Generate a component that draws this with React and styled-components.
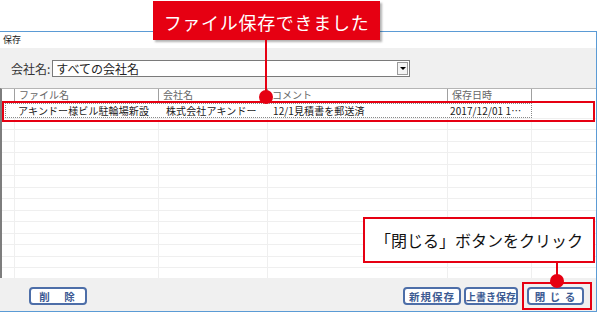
import React from "react";
import styled, { createGlobalStyle } from "styled-components";

const GlobalStyle = createGlobalStyle`
  html, body {
    margin: 0;
    padding: 0;
    background: #ffffff;
  }
  body {
    font-family: "Noto Sans CJK JP", "Noto Sans", sans-serif;
  }
`;

const RED = "#e60012";

// Page canvas (annotations sit over the window)
const Canvas = styled.div`
  position: relative;
  width: 599px;
  height: 313px;
  overflow: hidden;
  padding-top: 31px;
  box-sizing: border-box;
`;

// Dialog window
const Window = styled.div`
  width: 597px;
  height: 281px;
  box-sizing: border-box;
  border: 1px solid #5b9bd5;
  border-left: none;
  display: flex;
  flex-direction: column;
  background: #f0f0f0;
`;

const TitleBar = styled.div`
  height: 16px;
  background: #ffffff;
  font-size: 9px;
  line-height: 15px;
  color: #222;
  padding-left: 3px;
`;

const FilterRow = styled.div`
  height: 40px;
  display: flex;
  align-items: flex-start;
  padding: 12px 0 0 11px;
  box-sizing: border-box;
`;

const Label = styled.span`
  font-size: 12px;
  line-height: 17px;
  color: #333;
  margin-right: 2px;
`;

const Combo = styled.div`
  width: 358px;
  height: 17px;
  box-sizing: border-box;
  border: 1px solid #7a7a7a;
  background: #fff;
  display: flex;
  align-items: center;
  font-size: 12px;
  color: #222;
  padding-left: 3px;
`;

const ComboText = styled.span`
  flex: 1;
  line-height: 15px;
`;

const ComboArrow = styled.div`
  width: 11px;
  height: 13px;
  margin-right: 1px;
  box-sizing: border-box;
  border: 1px solid #9a9a9a;
  background: #f4f4f4;
  display: flex;
  align-items: center;
  justify-content: center;

  &::after {
    content: "";
    border-left: 3px solid transparent;
    border-right: 3px solid transparent;
    border-top: 3px solid #000;
  }
`;

const List = styled.div`
  height: 190px;
  width: 596px;
  box-sizing: border-box;
  background: #fff;
  border-left: 2px solid #7d7d7d;
  border-top: 1px solid #b5b5b5;
  overflow: hidden;
`;

const COLS = "13px 144px 109px 180px 84px 1fr";

const HeaderRow = styled.div`
  display: grid;
  grid-template-columns: ${COLS};
  height: 12px;
  background: #fff;
`;

const HeaderCell = styled.div`
  border-right: 1px solid #a0a0a0;
  font-size: 10px;
  line-height: 12px;
  color: #666;
  padding-left: 4px;
  white-space: nowrap;
  &:last-child { border-right: none; }
`;

const Row = styled.div`
  display: grid;
  grid-template-columns: ${COLS};
  height: ${(p) => p.$h}px;
  box-sizing: border-box;
  border-bottom: 1px solid #efefef;
`;

const Cell = styled.div`
  border-right: ${(p) => (p.$plain ? "none" : "1px solid #efefef")};
  font-size: 10px;
  letter-spacing: 0.1px;
  line-height: 15px;
  color: #222;
  padding-left: ${(p) => p.$pad ?? 3}px;
  white-space: nowrap;
  overflow: hidden;
  &:last-child { border-right: none; }
`;

const Focus = styled.div`
  grid-column: 1 / 6;
  display: grid;
  grid-template-columns: 10px 147px 107px 180px 84px;
  outline: 1px dotted #888;
  outline-offset: -1px;
  margin: 2px 0 0 3px;
`;

const Footer = styled.div`
  flex: 1;
  display: flex;
  align-items: flex-start;
  padding: 9px 12px 0 29px;
`;

const Spacer = styled.div`
  flex: 1;
`;

const Button = styled.div`
  width: ${(p) => p.$w}px;
  height: 18px;
  box-sizing: border-box;
  border: 2px solid #4d6ea8;
  border-radius: 4px;
  background: #fff;
  color: #3c5a92;
  font-size: ${(p) => p.$fs || 10.5}px;
  font-weight: bold;
  letter-spacing: ${(p) => p.$ls ?? 1}px;
  display: flex;
  align-items: center;
  justify-content: center;
  margin-left: ${(p) => p.$ml || 0}px;
  white-space: pre;
`;

// Annotation overlays
const Callout = styled.div`
  position: absolute;
  left: 153px;
  top: 1px;
  width: 227px;
  height: 39px;
  background: ${RED};
  box-shadow: 2px 2px 2px rgba(0, 0, 0, 0.3);
  color: #fff;
  font-size: 18px;
  letter-spacing: 0.7px;
  display: flex;
  align-items: center;
  justify-content: center;
  padding-top: 2px;
  box-sizing: border-box;
`;

const NoteBox = styled.div`
  position: absolute;
  left: 363px;
  top: 217px;
  width: 232px;
  height: 46px;
  box-sizing: border-box;
  border: 2px solid ${RED};
  background: #fff;
  color: #111;
  font-size: 16px;
  display: flex;
  align-items: center;
  justify-content: center;
`;

const Leader = styled.div`
  position: absolute;
  left: ${(p) => p.$x - 1}px;
  top: ${(p) => p.$y1}px;
  width: 2px;
  height: ${(p) => p.$y2 - p.$y1}px;
  background: ${RED};
`;

const Dot = styled.div`
  position: absolute;
  left: ${(p) => p.$x - 7}px;
  top: ${(p) => p.$y - 7}px;
  width: 14px;
  height: 14px;
  border-radius: 50%;
  background: ${RED};
`;

const Frame = styled.div`
  position: absolute;
  left: ${(p) => p.$x}px;
  top: ${(p) => p.$y}px;
  width: ${(p) => p.$w}px;
  height: ${(p) => p.$h}px;
  box-sizing: border-box;
  border: 2px solid ${RED};
`;

const emptyRows = Array.from({ length: 14 });

export default function App() {
  return (
    <>
      <GlobalStyle />
      <Canvas>
        <Window>
          <TitleBar>保存</TitleBar>
          <FilterRow>
            <Label>会社名:</Label>
            <Combo>
              <ComboText>すべての会社名</ComboText>
              <ComboArrow />
            </Combo>
          </FilterRow>
          <List>
            <HeaderRow>
              <HeaderCell />
              <HeaderCell>ファイル名</HeaderCell>
              <HeaderCell>会社名</HeaderCell>
              <HeaderCell>コメント</HeaderCell>
              <HeaderCell>保存日時</HeaderCell>
              <HeaderCell />
            </HeaderRow>
            <Row $h={17.5}>
              <Focus>
                <Cell $plain />
                <Cell $plain>アキンドー様ビル駐輪場新設</Cell>
                <Cell $plain $pad={4}>株式会社アキンドー</Cell>
                <Cell $plain $pad={4}>12/1見積書を郵送済</Cell>
                <Cell $plain $pad={1}>2017/12/01 1…</Cell>
              </Focus>
              <Cell />
            </Row>
            {emptyRows.map((_, i) => (
              <Row key={i} $h={11.5}>
                <Cell />
                <Cell />
                <Cell />
                <Cell />
                <Cell />
                <Cell />
              </Row>
            ))}
          </List>
          <Footer>
            <Button $w={58} $ls={2}>削　除</Button>
            <Spacer />
            <Button $w={58}>新規保存</Button>
            <Button $w={54} $ml={3} $ls={0} $fs={10}>上書き保存</Button>
            <Button $w={57} $ml={9} $ls={1}>閉 じ る</Button>
          </Footer>
        </Window>

        <Frame $x={2} $y={101} $w={593} $h={21} />
        <Frame $x={522} $y={282} $w={70} $h={28} />

        <Callout>ファイル保存できました</Callout>
        <Leader $x={266} $y1={40} $y2={97} />
        <Dot $x={266} $y={97} />

        <NoteBox>「閉じる」ボタンをクリック</NoteBox>
        <Leader $x={557} $y1={263} $y2={280} />
        <Dot $x={557} $y={281} />
      </Canvas>
    </>
  );
}
